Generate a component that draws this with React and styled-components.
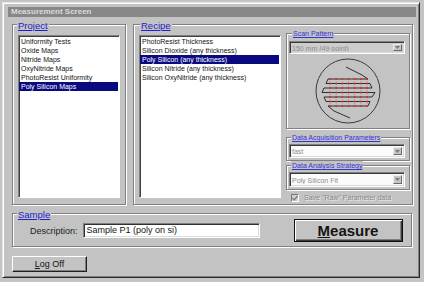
import React from 'react';
import styled, { createGlobalStyle } from 'styled-components';

const Global = createGlobalStyle`
  html, body { margin: 0; padding: 0; background: #c4c4c4; }
  body { font-family: "Liberation Sans", Arial, sans-serif; }
`;

const Window = styled.div`
  box-sizing: border-box;
  margin: 2px 0 0 2px;
  width: 418px;
  height: 276px;
  background: #c3c3c3;
  border: 1px solid;
  border-color: #e6e6e6 #2a2a2a #2a2a2a #e6e6e6;
  box-shadow: inset 1px 1px #ffffff, inset -1px -1px #808080;
  padding: 4px 3px 0 5px;
  display: flex;
  flex-direction: column;
  font-family: "Liberation Sans", Arial, sans-serif;
`;

const TitleBar = styled.div`
  height: 10px;
  background: #878787;
  color: #dadada;
  font-weight: bold;
  font-size: 8px;
  line-height: 10px;
  padding-left: 3px;
  white-space: nowrap;
`;

const Body = styled.div`
  display: flex;
  flex-direction: column;
  padding: 0 3px 0 4px;
`;

const MainRow = styled.div`
  display: flex;
  gap: 7px;
  margin-top: 7px;
  height: 181px;
`;

const Frame = styled.div`
  position: relative;
  box-sizing: border-box;
  border: 1px solid #808080;
  box-shadow: inset 1px 1px #ffffff, 1px 1px #ffffff;
`;

const FrameLabel = styled.span`
  position: absolute;
  left: ${p => p.$left}px;
  top: ${p => (p.$small ? -5 : -5)}px;
  padding: 0 1px;
  background: #c3c3c3;
  color: ${p => (p.$small ? '#3434d4' : '#2222cc')};
  font-size: ${p => (p.$small ? 7 : 9.5)}px;
  line-height: ${p => (p.$small ? 9 : 11)}px;
  text-decoration: underline;
  white-space: nowrap;
`;

const ProjectGroup = styled(Frame)`
  width: 114px;
  display: flex;
  padding: 10px 5px 6px 5px;
`;

const RecipeGroup = styled(Frame)`
  flex: 1;
  display: flex;
  gap: 5px;
  padding: 8px 2px 2px 5px;
`;

const ListBox = styled.div`
  box-sizing: border-box;
  background: #ffffff;
  border: 1px solid;
  border-color: #808080 #ffffff #ffffff #808080;
  box-shadow: inset 1px 1px #404040;
  padding: 1px 1px 0 0;
  width: ${p => (p.$width ? `${p.$width}px` : 'auto')};
  flex: ${p => (p.$width ? 'none' : '1')};
  height: ${p => (p.$height ? `${p.$height}px` : 'auto')};
  margin-top: ${p => p.$mt || 0}px;
  overflow: hidden;
`;

const ListItem = styled.div`
  height: 9px;
  line-height: 9px;
  font-size: 7px;
  padding-left: 2px;
  white-space: nowrap;
  color: ${p => (p.$selected ? '#ffffff' : '#141414')};
  background: ${p => (p.$selected ? '#0a0a80' : 'transparent')};
`;

const RightColumn = styled.div`
  flex: 1;
  display: flex;
  flex-direction: column;
`;

const ScanGroup = styled(Frame)`
  height: 97px;
  padding: 7px 4px 0 2px;
  display: flex;
  flex-direction: column;
`;

const SmallGroup = styled(Frame)`
  height: ${p => p.$h}px;
  margin-top: ${p => p.$mt}px;
  padding: 6px 4px 0 2px;
`;

const Select = styled.div`
  box-sizing: border-box;
  height: ${p => p.$h}px;
  display: flex;
  align-items: stretch;
  background: ${p => p.$bg};
  border: 1px solid;
  border-color: #808080 #ffffff #ffffff #808080;
  box-shadow: inset 1px 1px #3a3a3a, inset -1px -1px #d8d8d8;
  padding: 2px 2px 2px 2px;
`;

const SelectValue = styled.div`
  flex: 1;
  font-size: 7px;
  line-height: ${p => p.$lh}px;
  color: #8c8c8c;
  white-space: nowrap;
  overflow: hidden;
`;

const SelectArrow = styled.div`
  box-sizing: border-box;
  width: 9px;
  background: #c6c6c6;
  border: 1px solid;
  border-color: #ececec #6a6a6a #6a6a6a #ececec;
  display: flex;
  align-items: center;
  justify-content: center;
`;

const ScanSvg = styled.svg`
  display: block;
  margin-top: 1px;
`;

const CheckRow = styled.div`
  display: flex;
  align-items: center;
  gap: 5px;
  margin-top: 3px;
  padding-left: 5px;
  height: 9px;
`;

const CheckBox = styled.div`
  box-sizing: border-box;
  width: 8px;
  height: 8px;
  background: #cfcfcf;
  border: 1px solid;
  border-color: #7a7a7a #ffffff #ffffff #7a7a7a;
  display: flex;
  align-items: center;
  justify-content: center;
`;

const DisabledText = styled.span`
  font-size: 7px;
  color: #8a8a8a;
  text-shadow: 1px 1px #ececec;
  white-space: nowrap;
`;

const SampleGroup = styled(Frame)`
  margin-top: 8px;
  margin-right: 1px;
  height: 34px;
  display: flex;
  align-items: center;
  padding: 1px 0 0 17px;
`;

const FieldLabel = styled.span`
  font-size: 9px;
  color: #1c1c1c;
  white-space: nowrap;
`;

const TextInput = styled.div`
  box-sizing: border-box;
  margin-left: 5px;
  width: 177px;
  height: 15px;
  background: #ffffff;
  border: 1px solid;
  border-color: #808080 #ffffff #ffffff #808080;
  box-shadow: inset 1px 1px #303030, inset -1px -1px #dcdcdc;
  font-size: 9px;
  line-height: 13px;
  padding-left: 3px;
  color: #141414;
  white-space: nowrap;
`;

const Button = styled.div`
  box-sizing: border-box;
  display: flex;
  align-items: center;
  justify-content: center;
  background: #c3c3c3;
  color: #141414;
  white-space: nowrap;
`;

const MeasureButton = styled(Button)`
  margin-left: 34px;
  width: 109px;
  height: 23px;
  border: 1px solid #101010;
  box-shadow: inset 1px 1px #ffffff, inset -1px -1px #3a3a3a, inset -2px -2px #808080;
  font-size: 15px;
  font-weight: bold;
`;

const LogOffButton = styled(Button)`
  margin-top: 9px;
  width: 75px;
  height: 16px;
  border: 1px solid;
  border-color: #ffffff #202020 #202020 #ffffff;
  box-shadow: inset -1px -1px #808080;
  font-size: 9px;
`;

const U = styled.span`
  text-decoration: underline;
`;

const projects = [
  'Uniformity Tests',
  'Oxide Maps',
  'Nitride Maps',
  'OxyNitride Maps',
  'PhotoResist Uniformity',
  'Poly Silicon Maps',
];

const recipes = [
  'PhotoResist Thickness',
  'Silicon Dioxide (any thickness)',
  'Poly Silicon (any thickness)',
  'Silicon Nitride (any thickness)',
  'Silicon OxyNitride (any thickness)',
];

const Arrow = () => (
  <svg width="5" height="3" viewBox="0 0 5 3">
    <path d="M0 0 H5 L2.5 3 Z" fill="#7a7a7a" />
  </svg>
);

const Dropdown = ({ value, h, bg, lh }) => (
  <Select $h={h} $bg={bg}>
    <SelectValue $lh={lh}>{value}</SelectValue>
    <SelectArrow>
      <Arrow />
    </SelectArrow>
  </Select>
);

const rowsY = [79, 83.5, 88, 92.5, 97, 101.5, 106];
const colsX = [330, 336.2, 342.3, 348.5, 354.7, 360.8, 367];

const ScanPattern = () => {
  const path = [
    [346, 67], [362, 75], [368, 79], [328, 79], [326, 83.5], [370, 83.5],
    [372, 88], [324, 88], [322, 92.5], [375, 92.5], [372, 97], [324, 97],
    [326, 101.5], [370, 101.5], [368, 106], [328, 106], [334, 111], [350, 118],
  ];
  return (
    <ScanSvg width="116" height="72" viewBox="289 55 116 72">
      <circle cx="348" cy="91" r="32" fill="none" stroke="#3a3a3a" strokeWidth="1" />
      {colsX.map(x => (
        <line key={x} x1={x} y1="79" x2={x} y2="106" stroke="#e05050" strokeWidth="0.6" strokeDasharray="1 1.2" opacity="0.7" />
      ))}
      <polyline
        points={path.map(p => p.join(',')).join(' ')}
        fill="none"
        stroke="#1e1e1e"
        strokeWidth="0.9"
      />
      {rowsY.map(y =>
        colsX.map(x => <circle key={`${x}-${y}`} cx={x} cy={y} r="0.9" fill="#e02828" />)
      )}
    </ScanSvg>
  );
};

export default function App() {
  return (
    <>
      <Global />
      <Window>
        <TitleBar>Measurement Screen</TitleBar>
        <Body>
          <MainRow>
            <ProjectGroup>
              <FrameLabel $left={4}>Project</FrameLabel>
              <ListBox>
                {projects.map((p, i) => (
                  <ListItem key={p} $selected={i === 5}>{p}</ListItem>
                ))}
              </ListBox>
            </ProjectGroup>
            <RecipeGroup>
              <FrameLabel $left={6}>Recipe</FrameLabel>
              <ListBox $width={142} $height={163} $mt={2}>
                {recipes.map((r, i) => (
                  <ListItem key={r} $selected={i === 2}>{r}</ListItem>
                ))}
              </ListBox>
              <RightColumn>
                <ScanGroup>
                  <FrameLabel $left={5} $small>Scan Pattern</FrameLabel>
                  <Dropdown value="150 mm (49 point)" h={13} bg="#cdcdcd" lh={9} />
                  <ScanPattern />
                </ScanGroup>
                <SmallGroup $h={24} $mt={8}>
                  <FrameLabel $left={4} $small>Data Acquisition Parameters</FrameLabel>
                  <Dropdown value="fast" h={14} bg="#fbfbfb" lh={10} />
                </SmallGroup>
                <SmallGroup $h={25} $mt={4}>
                  <FrameLabel $left={4} $small>Data Analysis Strategy</FrameLabel>
                  <Dropdown value="Poly Silicon Fit" h={15} bg="#fbfbfb" lh={11} />
                </SmallGroup>
                <CheckRow>
                  <CheckBox>
                    <svg width="6" height="6" viewBox="0 0 6 6">
                      <path d="M0.5 3 L2.3 4.8 L5.5 1" fill="none" stroke="#7a7a7a" strokeWidth="1.2" />
                    </svg>
                  </CheckBox>
                  <DisabledText>Save "Raw" Parameter data</DisabledText>
                </CheckRow>
              </RightColumn>
            </RecipeGroup>
          </MainRow>
          <SampleGroup>
            <FrameLabel $left={4}>Sample</FrameLabel>
            <FieldLabel>Description:</FieldLabel>
            <TextInput>Sample P1 (poly on si)</TextInput>
            <MeasureButton>
              <U>M</U>easure
            </MeasureButton>
          </SampleGroup>
          <LogOffButton>
            <U>L</U>og Off
          </LogOffButton>
        </Body>
      </Window>
    </>
  );
}
